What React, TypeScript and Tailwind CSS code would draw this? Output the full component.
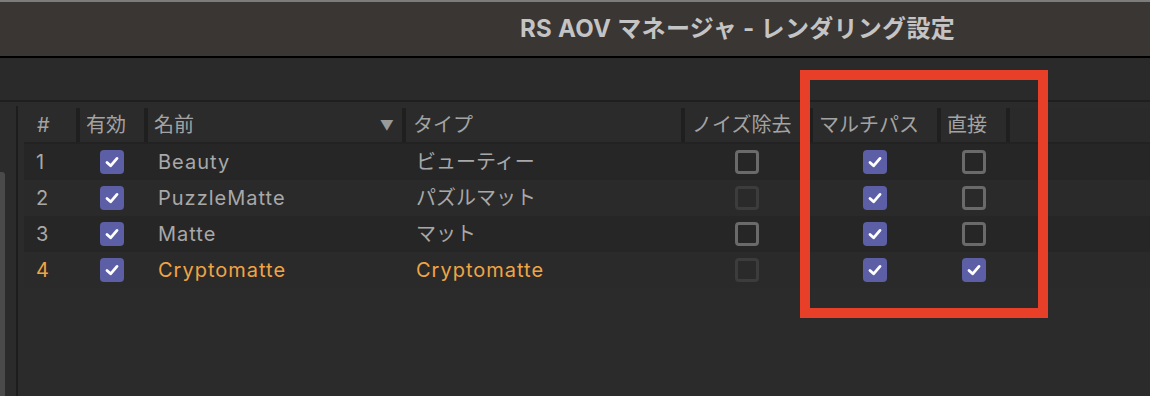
import React from "react";

type Row = {
  n: number;
  name: string;
  type: string;
  noise: "on" | "off" | "disabled";
  multi: boolean;
  direct: boolean;
  active?: boolean;
};

const ROWS: Row[] = [
  { n: 1, name: "Beauty", type: "ビューティー", noise: "off", multi: true, direct: false },
  { n: 2, name: "PuzzleMatte", type: "パズルマット", noise: "disabled", multi: true, direct: false },
  { n: 3, name: "Matte", type: "マット", noise: "off", multi: true, direct: false },
  { n: 4, name: "Cryptomatte", type: "Cryptomatte", noise: "disabled", multi: true, direct: true, active: true },
];

const FONT = { fontFamily: '"Inter", "Noto Sans CJK JP", sans-serif' };

// latin labels in the original UI run wider than Inter, so open them up a bit
const isLatin = (s: string) => /^[\x00-\x7f]+$/.test(s);

function Check({ state }: { state: "on" | "off" | "disabled" }) {
  if (state === "on") {
    return (
      <div className="w-[24px] h-[24px] rounded-[4px] bg-[#5c5fa6] flex items-center justify-center">
        <svg width="16" height="16" viewBox="0 0 16 16" fill="none">
          <path d="M3 8.4 L6.6 11.8 L13 4.4" stroke="white" strokeWidth="2.8" strokeLinecap="round" strokeLinejoin="round" />
        </svg>
      </div>
    );
  }
  return (
    <div
      className={
        state === "off"
          ? "w-[24px] h-[24px] rounded-[4px] border-[3px] border-[#6a6a6a]"
          : "w-[24px] h-[24px] rounded-[4px] border-[3px] border-[#3c3c3c]"
      }
    />
  );
}

function Label({ text }: { text: string }) {
  return <span className={isLatin(text) ? "tracking-[1px]" : ""}>{text}</span>;
}

export default function App() {
  return (
    <div className="w-[1150px] h-[396px] overflow-hidden relative bg-[#2b2b2b] flex flex-col" style={FONT}>
      {/* window top edge */}
      <div className="h-[2px] bg-[#7c7c7c]" />

      {/* Title bar */}
      <div className="h-[54px] bg-[#3a3634] flex items-center pl-[520px]">
        <span className="text-[24px] font-bold text-[#c4c4c4] tracking-[0.3px]">RS AOV マネージャ - レンダリング設定</span>
      </div>
      <div className="h-[2px] bg-black" />

      {/* Toolbar (empty) */}
      <div className="h-[42px] bg-[#2a2a2a]" />
      <div className="h-[2px] bg-[#1f1f1f]" />

      <div className="flex-1 flex">
        {/* left scrollbar strip */}
        <div className="w-[16px] flex flex-col">
          <div className="h-[70px]" />
          <div className="w-[5px] flex-1 bg-[#4a4a4a] rounded-tr-[3px]" />
        </div>
        <div className="w-[2px] bg-[#1d1d1d] mt-[4px]" />
        <div className="w-[6px]" />

        {/* Table */}
        <div className="flex-1 flex flex-col pt-[6px]">
          {/* Header */}
          <div className="flex gap-[4px] h-[34px] bg-[#1f1f1f] text-[20px] text-[#a3a3a3]">
            <div className="w-[52px] bg-[#2b2b2b] flex items-center pl-[13px]">#</div>
            <div className="w-[64px] bg-[#2b2b2b] flex items-center pl-[6px]">有効</div>
            <div className="w-[254px] bg-[#2b2b2b] flex items-center pl-[6px] justify-between pr-[8px]">
              <span>名前</span>
              <span className="text-[14px] text-[#9a9a9a]">▼</span>
            </div>
            <div className="w-[275px] bg-[#2b2b2b] flex items-center pl-[7px]">タイプ</div>
            <div className="w-[124px] bg-[#2b2b2b] flex items-center pl-[7px]">ノイズ除去</div>
            <div className="w-[124px] bg-[#2b2b2b] flex items-center pl-[6px]">マルチパス</div>
            <div className="w-[65px] bg-[#2b2b2b] flex items-center pl-[6px]">直接</div>
            <div className="flex-1 bg-[#2a2a2a]" />
          </div>
          <div className="h-[2px] bg-[#222222]" />

          {/* Rows */}
          {ROWS.map((r, i) => (
            <div
              key={r.n}
              className={
                (i % 2 === 0 ? "bg-[#262626] " : "bg-[#2a2a2a] ") +
                "flex gap-[4px] h-[36px] items-center text-[20px] " +
                (r.active ? "text-[#f1a444]" : "text-[#a8a8a8]")
              }
            >
              <div className="w-[52px] pl-[12px]">{r.n}</div>
              <div className="w-[64px] flex justify-center">
                <Check state="on" />
              </div>
              <div className="w-[254px] pl-[10px]">
                <Label text={r.name} />
              </div>
              <div className="w-[275px] pl-[10px]">
                <Label text={r.type} />
              </div>
              <div className="w-[124px] flex justify-center">
                <Check state={r.noise} />
              </div>
              <div className="w-[124px] flex justify-center">
                <Check state={r.multi ? "on" : "off"} />
              </div>
              <div className="w-[65px] flex justify-center">
                <Check state={r.direct ? "on" : "off"} />
              </div>
              <div className="flex-1" />
            </div>
          ))}
          <div className="flex-1 bg-[#2b2b2b]" />
        </div>
      </div>

      {/* Red highlight annotation */}
      <div className="absolute left-[800px] top-[70px] w-[248px] h-[248px] border-[10px] border-[#e83f28]" />
    </div>
  );
}
